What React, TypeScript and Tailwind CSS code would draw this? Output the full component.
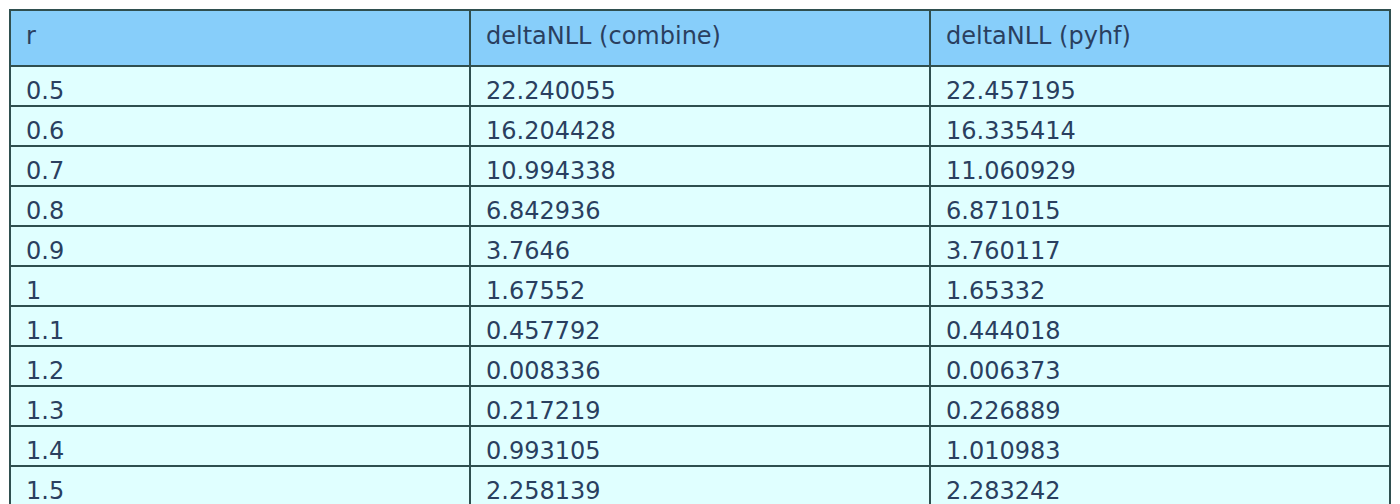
import React from "react";

const rows: [string, string, string][] = [
  ["0.5", "22.240055", "22.457195"],
  ["0.6", "16.204428", "16.335414"],
  ["0.7", "10.994338", "11.060929"],
  ["0.8", "6.842936", "6.871015"],
  ["0.9", "3.7646", "3.760117"],
  ["1", "1.67552", "1.65332"],
  ["1.1", "0.457792", "0.444018"],
  ["1.2", "0.008336", "0.006373"],
  ["1.3", "0.217219", "0.226889"],
  ["1.4", "0.993105", "1.010983"],
  ["1.5", "2.258139", "2.283242"],
];

export default function App() {
  return (
    <div className="bg-white w-[1400px] h-[504px] overflow-hidden pl-[9px] pt-[9px] font-['DejaVu_Sans',sans-serif] text-[24px] leading-[28px] text-[#2a3f5f]">
      <div className="w-[1382px] border-t-2 border-l-2 border-[#2f4f4f]">
        <div className="grid grid-cols-[460px_460px_460px] bg-[#87cefa]">
          {["r", "deltaNLL (combine)", "deltaNLL (pyhf)"].map((h) => (
            <div key={h} className="h-[56px] border-r-2 border-b-2 border-[#2f4f4f] pl-[15px] pt-[11px] whitespace-nowrap">
              {h}
            </div>
          ))}
        </div>
        {rows.map((r) => (
          <div key={r[0]} className="grid grid-cols-[460px_460px_460px] bg-[#e0ffff]">
            {r.map((c, i) => (
              <div key={i} className="h-[40px] border-r-2 border-b-2 border-[#2f4f4f] pl-[15px] pt-[10px] whitespace-nowrap">
                {c}
              </div>
            ))}
          </div>
        ))}
      </div>
    </div>
  );
}
